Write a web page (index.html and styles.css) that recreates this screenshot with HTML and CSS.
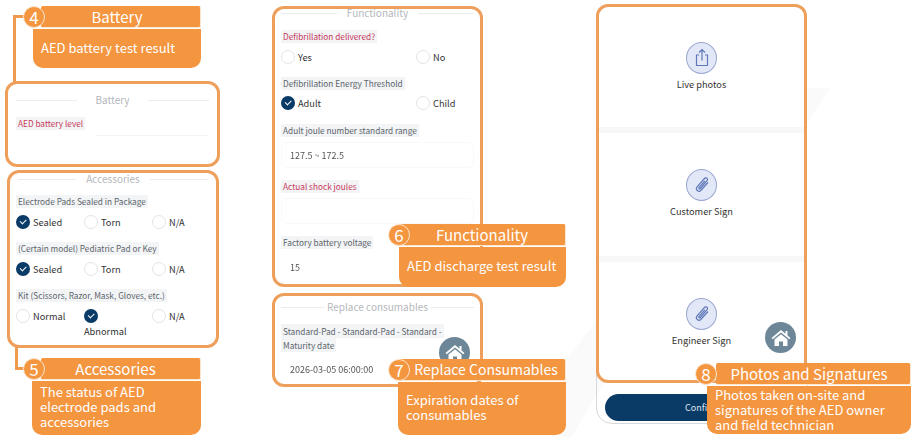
FILE: index.html
```html
<!DOCTYPE html>
<html lang="en">
<head>
  <meta charset="UTF-8" />
  <title>AED Inspection Guide</title>
  <link rel="stylesheet" href="styles.css">
</head>
<body>
  <div class="canvas">
    <svg class="watermark" width="919" height="439" viewBox="0 0 919 439">
      <path d="M520 420 L620 290 L660 290 L570 439 Z" fill="#fafafa"/>
      <path d="M806 88 L830 88 L806 125 Z" fill="#fafafa"/>
    </svg>

    <!-- connector lines -->
    <div class="wire wire-4"></div>
    <div class="wire wire-5"></div>

    <!-- Battery -->
    <section class="panel panel-battery">
      <div class="divider">Battery</div>
      <span class="tag req">AED battery level</span>
      <div class="rule"></div>
    </section>

    <!-- Accessories -->
    <section class="panel panel-acc">
      <div class="divider">Accessories</div>
      <div class="field">
        <span class="tag">Electrode Pads Sealed in Package</span>
        <div class="radios three">
          <div class="radio on">Sealed</div>
          <div class="radio">Torn</div>
          <div class="radio">N/A</div>
        </div>
      </div>
      <div class="field">
        <span class="tag">(Certain model) Pediatric Pad or Key</span>
        <div class="radios three">
          <div class="radio on">Sealed</div>
          <div class="radio">Torn</div>
          <div class="radio">N/A</div>
        </div>
      </div>
      <div class="field">
        <span class="tag">Kit (Scissors, Razor, Mask, Gloves, etc.)</span>
        <div class="radios three">
          <div class="radio">Normal</div>
          <div class="radio on wrap">Abnormal</div>
          <div class="radio">N/A</div>
        </div>
      </div>
    </section>

    <!-- Functionality -->
    <section class="panel panel-func">
      <div class="divider">Functionality</div>
      <div class="field">
        <span class="tag req">Defibrillation delivered?</span>
        <div class="radios two">
          <div class="radio">Yes</div>
          <div class="radio">No</div>
        </div>
      </div>
      <div class="field">
        <span class="tag">Defibrillation Energy Threshold</span>
        <div class="radios two tight">
          <div class="radio on">Adult</div>
          <div class="radio">Child</div>
        </div>
      </div>
      <div class="field">
        <span class="tag">Adult joule number standard range</span>
        <div class="value">127.5 ~ 172.5</div>
      </div>
      <div class="field">
        <span class="tag req">Actual shock joules</span>
        <div class="value"></div>
      </div>
      <div class="field">
        <span class="tag">Factory battery voltage</span>
        <div class="value plain">15</div>
      </div>
    </section>

    <!-- Replace consumables -->
    <section class="panel panel-cons">
      <div class="divider">Replace consumables</div>
      <div class="long"><span>Standard-Pad - Standard-Pad - Standard - Maturity date</span></div>
      <div class="value plain">2026-03-05 06:00:00</div>
    </section>

    <!-- Phone bottom with confirm button -->
    <div class="phone-foot"><div class="confirm">Confirm</div></div>

    <!-- Photos and signatures -->
    <section class="panel panel-photos">
      <div class="upload">
        <span class="upload-icon">
          <svg width="18" height="20" viewBox="0 0 18 20" fill="none" stroke="#5f78b8" stroke-width="1.2">
            <path d="M6 7H3.5v10.5h11V7H12"/>
            <path d="M9 12.5V1.5M6 4.5l3-3 3 3"/>
          </svg>
        </span>
        Live photos
      </div>
      <div class="upload">
        <span class="upload-icon">
          <svg width="18" height="20" viewBox="0 0 18 20" fill="none" stroke="#5f78b8" stroke-width="1.2">
            <path d="M15 7.5l-7.2 8a2.6 2.6 0 0 1-3.9-3.4l7.6-8.600a1.700 1.700 0 0 1 2.600 2.200l-7 8a.8.8 0 0 1-1.200-1l6-6.800"/>
          </svg>
        </span>
        Customer Sign
      </div>
      <div class="upload">
        <span class="upload-icon">
          <svg width="18" height="20" viewBox="0 0 18 20" fill="none" stroke="#5f78b8" stroke-width="1.2">
            <path d="M15 7.5l-7.2 8a2.6 2.6 0 0 1-3.9-3.4l7.6-8.600a1.700 1.700 0 0 1 2.600 2.200l-7 8a.8.8 0 0 1-1.200-1l6-6.800"/>
          </svg>
        </span>
        Engineer Sign
      </div>
    </section>

    <!-- floating home buttons -->
    <div class="home home-a">
      <svg width="20" height="18" viewBox="0 0 20 18"><path d="M10 1L0.5 9l1.2 1.2L10 3.4l8.3 6.8L19.5 9l-3-2.5V2h-2v2.8z" fill="#fff"/><path d="M3.5 10.6L10 5.2l6.500 5.400V17h-4.500v-4.500H8V17H3.500z" fill="#fff"/></svg>
    </div>
    <div class="home home-b">
      <svg width="20" height="18" viewBox="0 0 20 18"><path d="M10 1L0.5 9l1.2 1.2L10 3.4l8.3 6.8L19.5 9l-3-2.5V2h-2v2.8z" fill="#fff"/><path d="M3.5 10.6L10 5.2l6.500 5.400V17h-4.500v-4.500H8V17H3.500z" fill="#fff"/></svg>
    </div>

    <!-- callouts -->
    <aside class="callout c4">
      <div class="num">4</div>
      <h3>Battery</h3>
      <p>AED battery test result</p>
    </aside>
    <aside class="callout c5">
      <div class="num">5</div>
      <h3>Accessories</h3>
      <p>The status of AED electrode pads and accessories</p>
    </aside>
    <aside class="callout c6">
      <div class="num">6</div>
      <h3>Functionality</h3>
      <p>AED discharge test result</p>
    </aside>
    <aside class="callout c7">
      <div class="num">7</div>
      <h3>Replace Consumables</h3>
      <p>Expiration dates of consumables</p>
    </aside>
    <aside class="callout c8">
      <div class="num">8</div>
      <h3>Photos and Signatures</h3>
      <p>Photos taken on-site and signatures of the AED owner and field technician</p>
    </aside>
  </div>
</body>
</html>
```

FILE: styles.css
```css
body {
  margin: 0;
  background: #fff;
  font-family: "Noto Sans CJK TC", "Noto Sans", sans-serif;
  color: #333;
}
.canvas {
  position: relative;
  width: 919px;
  height: 439px;
  overflow: hidden;
}
.watermark {
  position: absolute;
  left: 0;
  top: 0;
}

/* connector lines */
.wire {
  position: absolute;
  border-left: 3px solid #ee9a4f;
}
.wire-4 {
  left: 13px;
  top: 15px;
  width: 14px;
  height: 67px;
  border-top: 3px solid #ee9a4f;
}
.wire-5 {
  left: 15px;
  top: 346px;
  width: 12px;
  height: 21px;
  border-bottom: 3px solid #ee9a4f;
}

/* highlighted panels */
.panel {
  position: absolute;
  box-sizing: border-box;
  background: #fff;
  border: 3px solid #ee9f5c;
  border-radius: 12px;
}
.panel-battery {
  left: 5px;
  top: 81px;
  width: 215px;
  height: 86px;
  padding: 0 8px;
  z-index: 1;
}
.panel-acc {
  left: 7px;
  top: 170px;
  width: 212px;
  height: 178px;
  padding: 0 6px;
}
.panel-func {
  left: 272px;
  top: 6px;
  width: 211px;
  height: 281px;
  padding: 0 6px;
}
.panel-cons {
  left: 272px;
  top: 293px;
  width: 211px;
  height: 94px;
  padding: 0 6px;
}
.panel-photos {
  left: 596px;
  top: 4px;
  width: 211px;
  height: 379px;
  display: grid;
  grid-template-rows: 126px 129px 1fr;
}

.divider {
  display: flex;
  align-items: center;
  gap: 10px;
  font-size: 10px;
  line-height: 14px;
  color: #b4b8bc;
  white-space: nowrap;
}
.divider::before,
.divider::after {
  content: "";
  flex: 1;
  border-top: 1px solid #ececec;
}
.panel-battery .divider {
  margin: 9px 0 10px;
  gap: 18px;
}
.panel-acc .divider {
  margin: -1px 2px 9px;
}
.panel-func .divider {
  margin: -3px 0 10px;
}
.panel-cons .divider {
  margin: 4px 0 10px;
  gap: 2px;
}

.tag {
  display: block;
  width: fit-content;
  background: #f2f4f6;
  padding: 0 2px;
  font-size: 8.25px;
  line-height: 13px;
  color: #5d646a;
  white-space: nowrap;
}
.tag.req {
  color: #c8395a;
}
.long {
  width: 170px;
  font-size: 8.25px;
  line-height: 14px;
  color: #5d646a;
}
.long span {
  background: #f2f4f6;
  padding: 1px 2px;
  -webkit-box-decoration-break: clone;
  box-decoration-break: clone;
}
.rule {
  margin: 5px 0 0 80px;
  border-top: 1px solid #f4f4f4;
}

.field {
  margin-bottom: 13px;
}
.radios {
  display: grid;
  margin-top: 7px;
}
.radios.tight {
  margin-top: 6px;
  margin-bottom: 14px;
}
.radios.three {
  grid-template-columns: 68px 68px 1fr;
}
.radios.two {
  grid-template-columns: 135px 1fr;
}
.radio {
  display: flex;
  align-items: center;
  gap: 3px;
  height: 14px;
  font-size: 9.25px;
  color: #333;
  position: relative;
}
.radio::before {
  content: "";
  flex: none;
  box-sizing: border-box;
  width: 14px;
  height: 14px;
  border: 1px solid #e2e4e6;
  border-radius: 50%;
  background: #fff;
}
.radio.on::before {
  border: 0;
  background: #0a3a66;
}
.radio.on::after {
  content: "";
  position: absolute;
  left: 4px;
  top: 4px;
  width: 5px;
  height: 2.5px;
  border-left: 1px solid #fff;
  border-bottom: 1px solid #fff;
  transform: rotate(-45deg);
}
.radio.wrap {
  flex-wrap: wrap;
  width: 50px;
  gap: 1px 3px;
  align-content: flex-start;
}

.value {
  box-sizing: border-box;
  height: 26px;
  margin: 5px 0 -1px;
  padding-left: 8px;
  border: 1px solid #f8f8f8;
  border-radius: 6px;
  font-size: 9px;
  line-height: 26px;
  color: #555;
  filter: blur(0.5px);
}
.value.plain {
  border-color: transparent;
}
.panel-cons .value {
  margin-top: 4px;
}

/* photo upload rows */
.upload {
  display: flex;
  flex-direction: column;
  align-items: center;
  padding-top: 36px;
  font-size: 9.25px;
  line-height: 14px;
  color: #333;
  border-bottom: 6px solid #f7f7f7;
}
.upload:first-child {
  padding-top: 35px;
}
.upload:last-child {
  border-bottom: 0;
}
.upload-icon {
  box-sizing: border-box;
  display: flex;
  align-items: center;
  justify-content: center;
  width: 31px;
  height: 32px;
  margin-bottom: 3px;
  border: 1px solid #9aa6d0;
  border-radius: 50%;
  background: #e2e8f8;
}

.phone-foot {
  position: absolute;
  left: 596px;
  top: 370px;
  box-sizing: border-box;
  width: 212px;
  height: 54px;
  padding: 23px 8px 0;
  border: 1px solid #d8d8d8;
  border-radius: 0 0 16px 16px;
}
.confirm {
  height: 27px;
  background: #0a3a66;
  border-radius: 14px;
  text-align: center;
  font-size: 9px;
  line-height: 27px;
  color: #dfe6ee;
}

.home {
  position: absolute;
  display: flex;
  align-items: center;
  justify-content: center;
  width: 31px;
  height: 31px;
  border-radius: 50%;
  background: #6d8798;
  z-index: 2;
}
.home-a {
  left: 439px;
  top: 337px;
}
.home-b {
  left: 765px;
  top: 322px;
}

/* numbered callouts */
.callout {
  position: absolute;
  z-index: 3;
  color: #fff;
}
.callout h3 {
  margin: 0 0 1px 8px;
  height: 21px;
  background: #f4953f;
  border-radius: 2px;
  border-bottom: 1px solid #fde6cf;
  border-right: 1px solid #fde6cf;
  font-size: 15px;
  font-weight: 400;
  line-height: 21px;
  text-align: center;
}
.callout p {
  margin: 0;
  box-sizing: border-box;
  background: #f4953f;
  border-radius: 0 0 10px 10px;
  padding: 0 8px;
  font-size: 13px;
  line-height: 15px;
}
.num {
  position: absolute;
  left: -10px;
  top: 0;
  box-sizing: border-box;
  width: 22px;
  height: 22px;
  background: #f4953f;
  border: 1px solid #fde6cf;
  border-radius: 50%;
  text-align: center;
  font-size: 17px;
  line-height: 20px;
}
.c4 {
  left: 33px;
  top: 6px;
  width: 168px;
}
.c4 h3 {
  padding-right: 7px;
}
.c4 p {
  height: 39px;
  line-height: 37px;
}
.c5 {
  left: 33px;
  top: 358px;
  width: 168px;
}
.c5 h3 {
  padding-right: 10px;
}
.c5 p {
  height: 54px;
  padding-top: 3px;
  margin-left: -1px;
}
.c6 {
  left: 399px;
  top: 224px;
  width: 167px;
}
.c6 .num {
  left: -11px;
}
.c6 h3 {
  margin-left: 0;
}
.c6 p {
  height: 40px;
  line-height: 38px;
}
.c7 {
  left: 399px;
  top: 359px;
  width: 167px;
}
.c7 .num {
  left: -11px;
}
.c7 h3 {
  margin-left: 0;
  padding-left: 8px;
  font-size: 14px;
  white-space: nowrap;
}
.c7 p {
  height: 53px;
  padding-top: 10px;
  margin-left: -1px;
}
.c8 {
  left: 707px;
  top: 363px;
  width: 204px;
}
.c8 .num {
  left: -12px;
}
.c8 h3 {
  margin-left: 9px;
  padding-right: 8px;
}
.c8 p {
  height: 48px;
  padding-top: 1px;
}
```
